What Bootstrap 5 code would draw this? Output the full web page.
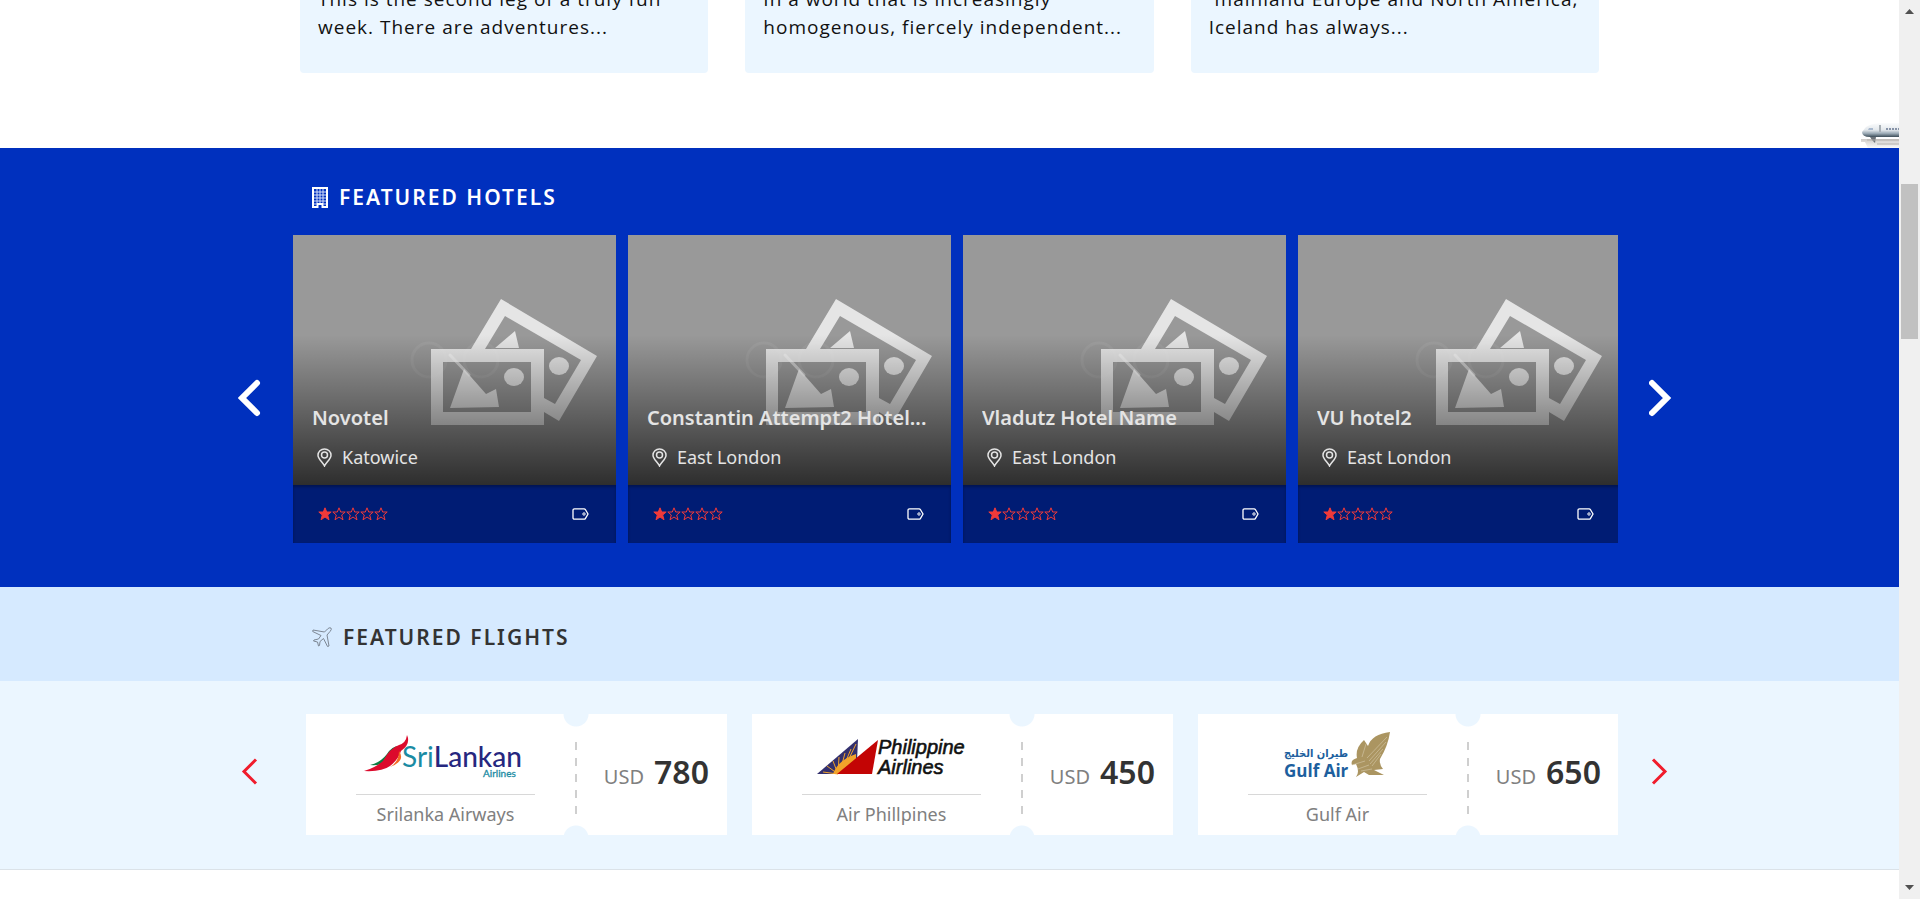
<!DOCTYPE html>
<html lang="en">
<head>
<meta charset="utf-8">
<meta name="viewport" content="width=device-width, initial-scale=1">
<title>Featured hotels and flights</title>
<link href="https://cdn.jsdelivr.net/npm/bootstrap@5.3.0/dist/css/bootstrap.min.css" rel="stylesheet">
<style>
  body { font-family: "Noto Sans", "Open Sans", sans-serif; color: #333; }
  .tours { max-height: 148px; padding-bottom: 75px; }
  .tour-row { max-width: 1299px; gap: 37px; }
  .tour { background: #ebf6ff; border-radius: 4px; padding: 0 0 32px 18px; flex: 1 1 0; color: #111; font-family: "Open Sans", sans-serif; font-size: 19px; line-height: 28px; letter-spacing: 1px; }
  .train { right: 0; bottom: 0; }
  .band { padding-left: 12px; }
  .wrap { max-width: 1435px; }
  .title-row { padding-left: 74px; gap: 11px; }
  .section-title { font-size: 21px; line-height: 28px; letter-spacing: 2px; font-weight: 600; text-transform: uppercase; }
  .slider { gap: 31px; }
  .arrow { width: 24px; color: #fff; margin-top: 18px; }
  .arrow-red { color: #f01c2c; margin-top: 0; margin-bottom: 6px; }
  .hotels { background: #0030be; padding-top: 35px; padding-bottom: 44px; }
  .hotel-track { gap: 12px; }
  .hotel { flex: 0 0 calc((100% + 15px) / 4 - 12px); background: #001c74; color: #e4e4e4; }
  .hotel-photo { background: #999; height: 250px; }
  .photo-art { width: 323px; height: 250px; }
  .shade { background: linear-gradient(transparent 40%, rgba(0,0,0,.7)); padding: 0 19px 16px; }
  .hotel-name { font-size: 20px; line-height: 28px; font-weight: 600; }
  .hotel-place { font-size: 18px; line-height: 24px; gap: 10px; padding-left: 5px; margin-top: 13px; }
  .hotel-foot { height: 58px; padding: 0 27px 0 25px; box-shadow: inset 0 2px 3px rgba(0,0,0,.3); }
  .flight-head { background: #d6eaff; padding-top: 36px; padding-bottom: 30px; }
  .flights { background: #ebf6ff; padding-top: 33px; padding-bottom: 34px; border-bottom: 1px solid #dbe2e8; }
  .flight-track { gap: 25px; margin-left: 13px; }
  .ticket { flex: 0 0 calc((100% + 26px) / 3 - 25px); height: 121px; background: radial-gradient(circle at 270px 0, #ebf6ff 12px, transparent 13px), radial-gradient(circle at 270px 124px, #ebf6ff 12px, transparent 13px), #fff; }
  .carrier { width: 270px; padding: 12px 41px 0 50px; }
  .carrier-name { border-top: 1px solid #d8d8d8; font-size: 18px; line-height: 24px; padding-top: 7px; color: #808080; }
  .logo { height: 67px; margin-bottom: 1px; }
  .perforation { width: 2px; height: 73px; margin: 8px 0 0 -1px; background: repeating-linear-gradient(#cfcfcf 0 8px, transparent 8px 16px); }
  .fare { color: #808080; font-size: 20px; line-height: 40px; gap: 10px; padding: 0 18px 1px 0; }
  .fare strong { font-size: 32px; color: #333; font-weight: 600; }
  .scroll-rail { width: 21px; background: #f0f0f0; padding: 9px 2px; }
  .scroll-thumb { height: 155px; background: #c1c1c1; margin-top: 170px; }
  .rest { min-height: 29px; }
</style>
</head>
<body class="bg-white">
<svg class="d-none" aria-hidden="true">
  <symbol id="photos" viewBox="0 0 323 250">
    <g fill="#e5e5e5">
      <path fill-rule="evenodd" d="M138 114H251V190H138ZM150 127V177H238V127Z"/>
      <path d="M178 114 208 64 304 121 266 186 251 177V163L262 169 288 125 212 81 192 114Z"/>
      <path d="M222 96 226 113H202ZM171 134 193 159 203 154 206 172 157 173Z"/>
      <ellipse cx="266" cy="131" rx="10" ry="9"/><ellipse cx="221" cy="142" rx="10" ry="9"/>
    </g>
    <g fill="none" stroke="#fff" stroke-linecap="round"><path d="M157 120 176 140" stroke-width="3" opacity=".45"/><g stroke-width="3" opacity=".06"><circle cx="136" cy="125" r="17"/><circle cx="188" cy="125" r="17"/></g></g>
  </symbol>
  <symbol id="pin" viewBox="0 0 15 19"><g fill="none" stroke="currentColor" stroke-width="1.5"><path d="M7.500 18C6 14.500 1 11 1 7.200A6.500 6.300 0 0 1 14 7.200C14 11 9 14.500 7.500 18Z"/><circle cx="7.500" cy="7" r="3"/></g></symbol>
  <symbol id="stars" viewBox="0 0 70 14">
    <g stroke="#f03a3a" fill="none">
      <path fill="#f03a3a" d="M7 .8 8.700 5H13.200L9.700 8 11 12.800 7 10 3 12.800 4.300 8 .8 5H5.300Z"/>
      <path d="M21 .8 22.700 5H27.200L23.700 8 25 12.800 21 10 17 12.800 18.300 8 14.800 5H19.300ZM35 .8 36.700 5H41.200L37.700 8 39 12.800 35 10 31 12.800 32.300 8 28.800 5H33.300ZM49 .8 50.700 5H55.200L51.700 8 53 12.800 49 10 45 12.800 46.300 8 42.800 5H47.300ZM63 .8 64.700 5H69.200L65.700 8 67 12.800 63 10 59 12.800 60.300 8 56.800 5H61.300Z"/>
    </g>
  </symbol>
  <symbol id="tag" viewBox="0 0 17 12"><g fill="none" stroke="#fff" stroke-width="1.300"><path d="M2.500 .8H12Q13 .8 13.500 1.700L16 6 13.500 10.300Q13 11.200 12 11.200H2.500Q1 11.200 1 9.700V2.300Q1 .8 2.500 .8Z"/><circle cx="12" cy="6" r="1.200" stroke-width="1"/></g></symbol>
</svg>

<div class="d-flex align-items-start">
<main class="flex-grow-1 d-flex flex-column min-vh-100 overflow-hidden">

  <section class="tours position-relative overflow-hidden d-flex flex-column justify-content-end">
    <div class="tour-row d-flex w-100 mx-auto">
      <article class="tour">This is the second leg of a truly fun<br>week. There are adventures...</article>
      <article class="tour">In a world that is increasingly<br>homogenous, fiercely independent...</article>
      <article class="tour">&nbsp;mainland Europe and North America,<br>Iceland has always...</article>
    </div>
    <svg class="train position-absolute" width="38" height="25" viewBox="0 0 38 25" aria-hidden="true">
      <defs><linearGradient id="body" x2="0" y2="1"><stop offset="0" stop-color="#fbfcfd"/><stop offset=".5" stop-color="#e3e8ec"/><stop offset=".75" stop-color="#9aa9b4"/><stop offset="1" stop-color="#3c4c57"/></linearGradient>
      <linearGradient id="ground" x2="0" y2="1"><stop offset="0" stop-color="#cfccc9"/><stop offset="1" stop-color="#fafafa"/></linearGradient></defs>
      <path d="M0 16H38V25H7L4 19H0Z" fill="url(#ground)"/>
      <path d="M38 0H18Q9 1 5 4L1 9Q1 14 9 14H38Z" fill="url(#body)"/>
      <path d="M9 14H15L14 20 11 17Z" fill="#6d7379"/>
      <path d="M8 5H12V7H7Z" fill="#a9b9ce"/><path d="M19 2V9" stroke="#a9b0b6" stroke-width="2"/>
      <path d="M25 6H38" stroke="#8793a8" stroke-width="2" stroke-dasharray="2 1"/><path d="M6 17H38M16 21H38" stroke="#b5b1ad" stroke-width="1"/>
    </svg>
  </section>

  <section class="hotels band">
    <div class="wrap mx-auto">
      <div class="title-row d-flex align-items-center text-white">
        <svg width="16" height="21" viewBox="0 0 16 21" fill="none" stroke="#fff" aria-hidden="true"><path d="M1 1H15V20H10.500V17H5.500V20H1Z" stroke-width="2"/><path d="M5 2V16M8 2V16M11 2V16M2 5H14M2 8H14M2 11H14M2 14H14M2 17H5M11 17H14" stroke="#d5defb"/></svg>
        <h2 class="section-title mb-0">Featured Hotels</h2>
      </div>
      <div class="slider d-flex align-items-center mt-4">
        <button type="button" class="arrow btn p-0 border-0" aria-label="Previous hotels"><svg class="d-block" width="24" height="38" viewBox="0 0 24 38" fill="none" stroke="currentColor" stroke-width="6" stroke-linecap="round" stroke-linejoin="miter"><path d="M19 4 4 19 19 34"/></svg></button>
        <div class="hotel-track d-flex flex-grow-1 overflow-hidden">
          <article class="hotel"><div class="hotel-photo position-relative overflow-hidden"><svg class="photo-art" aria-hidden="true"><use href="#photos"/></svg><div class="shade position-absolute top-0 start-0 w-100 h-100 d-flex flex-column justify-content-end"><h3 class="hotel-name text-truncate mb-0">Novotel</h3><div class="hotel-place d-flex align-items-center"><svg width="15" height="19" aria-hidden="true"><use href="#pin"/></svg>Katowice</div></div></div><div class="hotel-foot d-flex justify-content-between align-items-center"><svg width="70" height="14" role="img" aria-label="1 of 5 stars"><use href="#stars"/></svg><svg width="17" height="12" aria-hidden="true"><use href="#tag"/></svg></div></article>
          <article class="hotel"><div class="hotel-photo position-relative overflow-hidden"><svg class="photo-art" aria-hidden="true"><use href="#photos"/></svg><div class="shade position-absolute top-0 start-0 w-100 h-100 d-flex flex-column justify-content-end"><h3 class="hotel-name text-truncate mb-0">Constantin Attempt2 Hotel...</h3><div class="hotel-place d-flex align-items-center"><svg width="15" height="19" aria-hidden="true"><use href="#pin"/></svg>East London</div></div></div><div class="hotel-foot d-flex justify-content-between align-items-center"><svg width="70" height="14" role="img" aria-label="1 of 5 stars"><use href="#stars"/></svg><svg width="17" height="12" aria-hidden="true"><use href="#tag"/></svg></div></article>
          <article class="hotel"><div class="hotel-photo position-relative overflow-hidden"><svg class="photo-art" aria-hidden="true"><use href="#photos"/></svg><div class="shade position-absolute top-0 start-0 w-100 h-100 d-flex flex-column justify-content-end"><h3 class="hotel-name text-truncate mb-0">Vladutz Hotel Name</h3><div class="hotel-place d-flex align-items-center"><svg width="15" height="19" aria-hidden="true"><use href="#pin"/></svg>East London</div></div></div><div class="hotel-foot d-flex justify-content-between align-items-center"><svg width="70" height="14" role="img" aria-label="1 of 5 stars"><use href="#stars"/></svg><svg width="17" height="12" aria-hidden="true"><use href="#tag"/></svg></div></article>
          <article class="hotel"><div class="hotel-photo position-relative overflow-hidden"><svg class="photo-art" aria-hidden="true"><use href="#photos"/></svg><div class="shade position-absolute top-0 start-0 w-100 h-100 d-flex flex-column justify-content-end"><h3 class="hotel-name text-truncate mb-0">VU hotel2</h3><div class="hotel-place d-flex align-items-center"><svg width="15" height="19" aria-hidden="true"><use href="#pin"/></svg>East London</div></div></div><div class="hotel-foot d-flex justify-content-between align-items-center"><svg width="70" height="14" role="img" aria-label="1 of 5 stars"><use href="#stars"/></svg><svg width="17" height="12" aria-hidden="true"><use href="#tag"/></svg></div></article>
        </div>
        <button type="button" class="arrow btn p-0 border-0" aria-label="Next hotels"><svg class="d-block" width="24" height="38" viewBox="0 0 24 38" fill="none" stroke="currentColor" stroke-width="6" stroke-linecap="round"><path d="M3 4 18 19 3 34"/></svg></button>
      </div>
    </div>
  </section>

  <section>
    <div class="flight-head band"><div class="wrap mx-auto"><div class="title-row d-flex align-items-center">
      <svg width="20" height="20" viewBox="0 0 20 20" fill="none" stroke="#7d8794" stroke-width="1" stroke-linejoin="round" aria-hidden="true"><path d="M19 1Q17 .2 15.500 2L12.500 5 1 3 .7 4.500 9 8.500 6.500 12 2 13 1.500 14 5.500 15 6.500 19 7.500 18.500 8 14.500 11.500 11.500 15.500 19.500 17 19 15 8 18 4.500Q20 2.500 19 1Z"/></svg>
      <h2 class="section-title mb-0">Featured Flights</h2>
    </div></div></div>
    <div class="flights band"><div class="wrap mx-auto">
      <div class="slider d-flex align-items-center">
        <button type="button" class="arrow arrow-red btn p-0 border-0" aria-label="Previous flights"><svg class="d-block" width="24" height="28" viewBox="0 0 24 28" fill="none" stroke="currentColor" stroke-width="3"><path d="M18 1.500 6 13.500 18 25.500"/></svg></button>
        <div class="flight-track d-flex flex-grow-1 overflow-hidden">
          <article class="ticket d-flex align-items-center">
            <div class="carrier align-self-start text-center">
              <svg class="logo w-100" viewBox="0 0 179 67" role="img" aria-label="SriLankan Airlines">
                <path d="M14 39Q24 37 31 28Q36 20 43 20Q35 27 34 33Q28 40 14 39Z" fill="#0b7c42"/>
                <path d="M8 45Q19 42 27 35Q34 22 43 19Q50 17 51 9Q55 18 45 25Q42 34 34 40Q26 46 8 45Z" fill="#dc0a2c"/>
                <path d="M34 41Q43 36 43 25Q50 35 34 41Z" fill="#f36a24"/>
                <g font-family="Lato, sans-serif"><text x="46" y="41" font-size="28" fill="#1b8ba3">Sri<tspan fill="#26277f" font-weight="500">Lankan</tspan></text><text x="127" y="51" font-size="10" fill="#1b8ba3" stroke="#1b8ba3" stroke-width=".3">Airlines</text></g>
              </svg>
              <div class="carrier-name">Srilanka Airways</div>
            </div>
            <div class="perforation"></div>
            <div class="fare d-flex align-items-baseline ms-auto">USD <strong>780</strong></div>
          </article>
          <article class="ticket d-flex align-items-center">
            <div class="carrier align-self-start text-center">
              <svg class="logo w-100" viewBox="0 0 179 67" role="img" aria-label="Philippine Airlines">
                <path d="M15 48 56 13 55 35 36 48Z" fill="#33306e"/>
                <path d="M31 48Q36 34 54 28V34L37 48Z" fill="#f2a32b"/>
                <path d="M36 48 21 46M36 48 25 40M36 48 31 35M36 48 37 31M38 46 43 27M41 42 49 23M44 39 54 18" stroke="#f2a32b" stroke-width="1"/>
                <path d="M35 48 76 14 70 48Z" fill="#c30404"/>
                <g font-family="Liberation Sans, sans-serif" font-style="italic" font-size="20" fill="#111" stroke="#111" stroke-width=".6"><text x="76" y="28">Philippine</text><text x="76" y="48">Airlines</text></g>
              </svg>
              <div class="carrier-name">Air Phillpines</div>
            </div>
            <div class="perforation"></div>
            <div class="fare d-flex align-items-baseline ms-auto">USD <strong>450</strong></div>
          </article>
          <article class="ticket d-flex align-items-center">
            <div class="carrier align-self-start text-center">
              <svg class="logo w-100" viewBox="0 0 179 67" role="img" aria-label="Gulf Air">
                <g fill="#1d5f9e" font-weight="700"><text x="68" y="31" text-anchor="middle" font-family="DejaVu Sans Condensed, DejaVu Sans, sans-serif" font-size="11" direction="rtl">طيران الخليج</text><text x="36" y="51" font-family="Open Sans, sans-serif" font-size="17">Gulf Air</text></g>
                <path d="M142 6Q124 8 120 20L116 14Q107 22 109 32Q102 34 104 39L108 38Q112 46 108 51L116 46 121 49H136L126 44 135 43Q131 38 132 33Q140 20 142 6Z" fill="#ab9561"/>
                <path d="M139 11 119 32M138 16 121 35M135 23 122 38M133 28 124 40M118 18 114 31M104 39 117 35M110 43 121 39M113 45 124 43" stroke="#dfd5bb" stroke-width=".5" fill="none"/>
              </svg>
              <div class="carrier-name">Gulf Air</div>
            </div>
            <div class="perforation"></div>
            <div class="fare d-flex align-items-baseline ms-auto">USD <strong>650</strong></div>
          </article>
        </div>
        <button type="button" class="arrow arrow-red btn p-0 border-0" aria-label="Next flights"><svg class="d-block" width="24" height="28" viewBox="0 0 24 28" fill="none" stroke="currentColor" stroke-width="3"><path d="M4 1.500 16 13.500 4 25.500"/></svg></button>
      </div>
    </div></div>
  </section>
  <div class="rest flex-grow-1"></div>
</main>

<aside class="scroll-rail sticky-top vh-100 d-flex flex-column flex-shrink-0" aria-hidden="true">
  <svg class="mx-auto" width="9" height="5"><path d="M0 5 4.500 0 9 5Z" fill="#505050"/></svg>
  <div class="scroll-thumb"></div>
  <svg class="mx-auto mt-auto" width="9" height="5"><path d="M0 0 4.500 5 9 0Z" fill="#505050"/></svg>
</aside>
</div>
<script src="https://cdn.jsdelivr.net/npm/bootstrap@5.3.0/dist/js/bootstrap.bundle.min.js"></script>
</body>
</html>
